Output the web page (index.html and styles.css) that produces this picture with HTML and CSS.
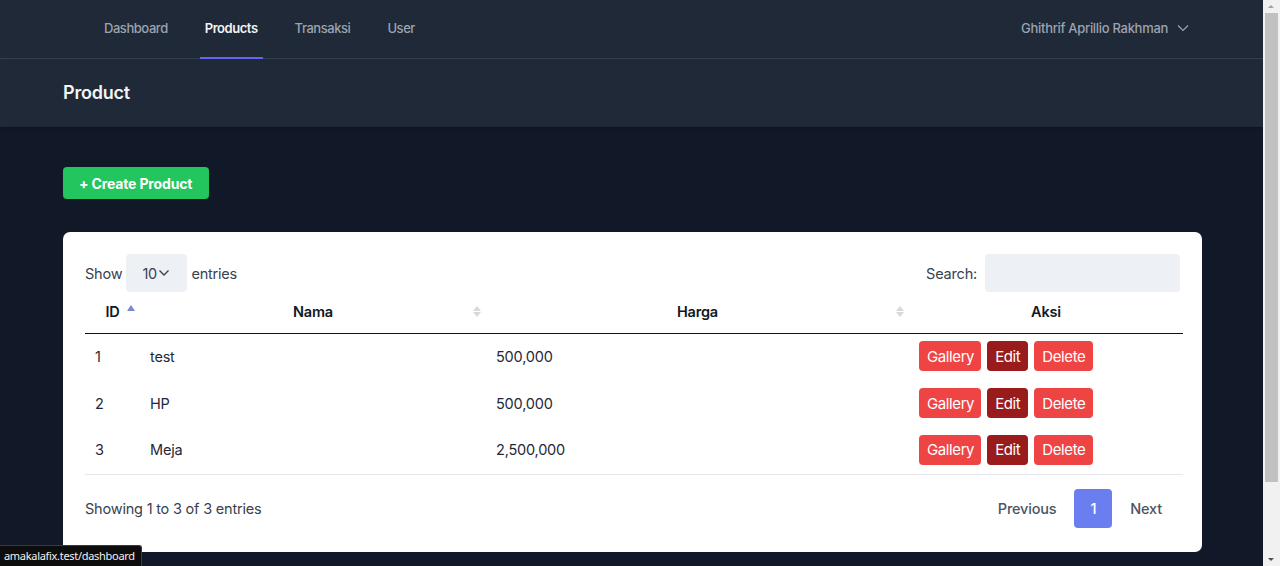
FILE: index.html
```html
<!DOCTYPE html>
<html>
<head>
<meta charset="utf-8">
<link rel="stylesheet" href="styles.css">
</head>
<body>
<div class="page">
  <nav class="nav">
    <div class="nav-links">
      <a class="nav-link">Dashboard</a>
      <a class="nav-link active">Products</a>
      <a class="nav-link">Transaksi</a>
      <a class="nav-link">User</a>
    </div>
    <div class="user">
      <span>Ghithrif Aprillio Rakhman</span>
      <svg width="12" height="12" viewBox="0 0 12 12"><path d="M1 3.5 6 8.5l5-5" fill="none" stroke="currentColor" stroke-width="1.2"/></svg>
    </div>
  </nav>
  <header class="header">
    <h2 class="title">Product</h2>
  </header>
  <main class="main">
    <div class="toolbar">
      <button class="btn-create">+ Create Product</button>
    </div>
    <div class="card">
      <div class="controls">
        <label class="length">Show <span class="select">10<svg width="12" height="8" viewBox="0 0 12 8"><path d="M1.5 1.5 6 6l4.5-4.5" fill="none" stroke="#374151" stroke-width="1.4"/></svg></span> entries</label>
        <label class="search">Search: <span class="input"></span></label>
      </div>
      <table class="table">
        <colgroup>
          <col class="c-id"><col class="c-nama"><col class="c-harga"><col class="c-aksi">
        </colgroup>
        <thead>
          <tr>
            <th class="sorted">ID<span class="sort asc"></span></th>
            <th>Nama<span class="sort both"></span></th>
            <th>Harga<span class="sort both"></span></th>
            <th>Aksi</th>
          </tr>
        </thead>
        <tbody>
          <tr><td>1</td><td>test</td><td>500,000</td><td><div class="actions"><a class="b b-red">Gallery</a><a class="b b-dark">Edit</a><a class="b b-red">Delete</a></div></td></tr>
          <tr><td>2</td><td>HP</td><td>500,000</td><td><div class="actions"><a class="b b-red">Gallery</a><a class="b b-dark">Edit</a><a class="b b-red">Delete</a></div></td></tr>
          <tr><td>3</td><td>Meja</td><td>2,500,000</td><td><div class="actions"><a class="b b-red">Gallery</a><a class="b b-dark">Edit</a><a class="b b-red">Delete</a></div></td></tr>
        </tbody>
      </table>
      <div class="footer">
        <div class="info">Showing 1 to 3 of 3 entries</div>
        <div class="paginate">
          <a class="pg">Previous</a>
          <a class="pg current">1</a>
          <a class="pg">Next</a>
        </div>
      </div>
    </div>
  </main>
  <div class="status">amakalafix.test/dashboard</div>
</div>
<div class="scrollbar">
  <div class="sb-arrow up"></div>
  <div class="sb-track"><div class="sb-thumb"></div></div>
  <div class="sb-arrow down"></div>
</div>
</body>
</html>
```

FILE: styles.css
```css
* { box-sizing: border-box; }
html, body { margin: 0; padding: 0; height: 566px; overflow: hidden; }
body {
  display: flex;
  font-family: Inter, "Noto Sans", sans-serif;
  background: #111827;
  -webkit-font-smoothing: antialiased;
}
.page { flex: 1; position: relative; min-width: 0; height: 566px; overflow: hidden; }

.nav {
  height: 59px;
  background: #1f2937;
  border-bottom: 1px solid #374151;
  display: flex;
  justify-content: space-between;
  align-items: stretch;
  padding: 0 74px 0 104px;
}
.nav-links { display: flex; }
.nav-link {
  display: flex;
  align-items: center;
  font-size: 13px;
  font-weight: 500;
  color: #9ca3af;
  padding: 0 0 2px;
  margin-right: 37px;
  border-bottom: 2px solid transparent;
  margin-bottom: -1px;
  letter-spacing: -0.45px;
}
.nav-link.active { color: #f3f4f6; border-bottom-color: #6366f1; padding: 0 5px 2px; margin-left: -5px; margin-right: 32px; font-weight: 600; }
.user {
  display: flex; align-items: center; gap: 9px;
  color: #9ca3af; font-size: 13px; font-weight: 500; letter-spacing: -0.3px;
  padding-bottom: 3px;
}

.header {
  background: #1f2937;
  height: 68px;
  display: flex; align-items: center;
  padding: 0 63px;
  box-shadow: 0 1px 3px rgba(0,0,0,0.2);
}
.title { margin: 0; color: #f3f4f6; font-size: 18px; font-weight: 600; letter-spacing: -0.2px; line-height: 28px; }

.main { padding: 40px 63px 0 63px; }
.toolbar { margin-bottom: 33px; }
.btn-create {
  height: 32px; padding: 0 17px 0 16px;
  background: #22c55e; color: #fff; border: none; border-radius: 4px;
  font-family: inherit; font-size: 14px; font-weight: 700; letter-spacing: -0.15px;
}

.card {
  width: 1139px;
  height: 320px;
  background: #fff;
  border-radius: 7px;
  padding: 22px 19px 0 22px;
}
.controls { display: flex; justify-content: space-between; align-items: center; height: 38px; font-size: 14.5px; color: #374151; letter-spacing: -0.2px; padding-right: 3px; }
.length, .search { display: flex; align-items: center; gap: 3px; }
.select { display: inline-flex; align-items: center; gap: 1px; background: #edf1f6; height: 38px; width: 61px; border-radius: 4px; padding-left: 16px; margin: 0 1px; color: #374151; }
.input { display: inline-block; background: #edf1f6; height: 38px; width: 195px; border-radius: 4px; margin-left: 5px; }

.table { width: 1098px; border-collapse: collapse; table-layout: fixed; font-size: 14.5px; color: #1f2937; letter-spacing: -0.2px; }
.c-id { width: 55px; } .c-nama { width: 346px; } .c-harga { width: 423px; } .c-aksi { width: 274px; }
th { height: 41px; font-weight: 600; text-align: center; position: relative; border-bottom: 1px solid #111; padding: 0 10px 1px; color: #111827; }
.sort { position: absolute; right: 5px; top: 12px; width: 8px; height: 14px; }
.sort.asc::before { content: ""; position: absolute; top: 1px; left: 0; border: 4px solid transparent; border-bottom: 6px solid #7b86d6; border-top: 0; }
.sort.both::before { content: ""; position: absolute; top: 2px; left: 0; border: 4px solid transparent; border-bottom: 5px solid #d7d9dd; border-top: 0; }
.sort.both::after { content: ""; position: absolute; top: 8px; left: 0; border: 4px solid transparent; border-top: 5px solid #d7d9dd; border-bottom: 0; }
td { height: 47px; padding: 0 10px 1px; vertical-align: middle; }
tbody tr:last-child td { border-bottom: 1px solid #e5e7eb; }
.actions { display: flex; gap: 6px; }
.b { display: inline-flex; align-items: center; height: 30px; padding: 0 7px 0 8px; border-radius: 4px; color: #fff; font-size: 15px; letter-spacing: -0.4px; }
.b-red { background: #ef4444; }
.b-dark { background: #991b1b; padding: 0 8px 0 8px; }
.b-dark + .b-red { padding: 0 8px 0 8px; }

.footer { display: flex; justify-content: space-between; align-items: center; padding-top: 14px; padding-right: 3px; }
.info { font-size: 14.5px; color: #374151; letter-spacing: -0.2px; }
.paginate { display: flex; align-items: center; }
.pg { font-size: 14.5px; font-weight: 500; color: #4b5563; padding: 0 18px; height: 39px; display: flex; align-items: center; letter-spacing: -0.2px; }
.pg.current { background: #6b7ef0; color: #fff; border-radius: 4px; padding: 0; width: 38px; justify-content: center; }

.status {
  position: absolute; left: 0; bottom: 0;
  background: #0d0d0d; color: #f2f2f2; border: 1px solid #3a3a3a; border-left: 0; border-bottom: 0;
  border-top-right-radius: 3px;
  font-family: "Noto Sans", sans-serif; font-size: 11px; letter-spacing: -0.3px;
  padding: 2px 6px 2px 4px; height: 21px; line-height: 16px;
}

.scrollbar { width: 17px; height: 566px; background: #f1f1f1; display: flex; flex-direction: column; }
.sb-arrow { height: 13px; position: relative; }
.sb-arrow.up::before { content: ""; position: absolute; left: 5px; top: 5px; border: 3.5px solid transparent; border-bottom: 3.5px solid #a3a3a3; border-top: 0; }
.sb-arrow.down::before { content: ""; position: absolute; left: 5px; top: 5px; border: 3.5px solid transparent; border-top: 3.5px solid #505050; border-bottom: 0; }
.sb-track { flex: 1; padding: 0 2px; }
.sb-thumb { height: 469px; background: #c1c1c1; }
```
